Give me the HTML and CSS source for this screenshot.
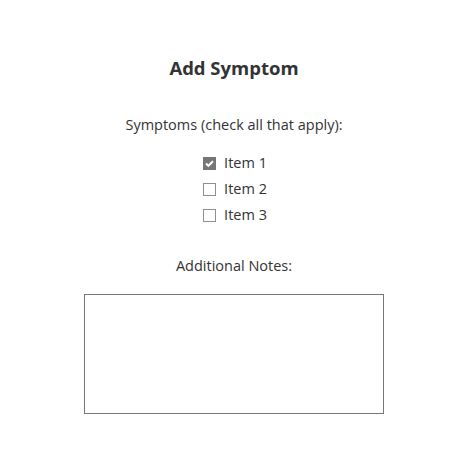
FILE: index.html
```html
<!DOCTYPE html>
<html>
<head>
<meta charset="utf-8">
<link rel="stylesheet" href="styles.css">
</head>
<body>
<main class="form">
  <h1 class="title">Add Symptom</h1>
  <p class="label">Symptoms (check all that apply):</p>
  <div class="items">
    <label class="item"><span class="box checked"><svg viewBox="0 0 13 13" width="13" height="13"><path d="M3 6.6 L5.4 8.8 L10 4.2" fill="none" stroke="#fff" stroke-width="2"/></svg></span>Item 1</label>
    <label class="item"><span class="box"></span>Item 2</label>
    <label class="item"><span class="box"></span>Item 3</label>
  </div>
  <p class="label notes-label">Additional Notes:</p>
  <textarea class="notes"></textarea>
</main>
</body>
</html>
```
FILE: styles.css
```css
html, body {
  margin: 0;
  background: #fff;
}
body {
  font-family: "Open Sans", "Noto Sans", sans-serif;
  color: #333;
}
.form {
  display: flex;
  flex-direction: column;
  align-items: center;
  padding-top: 54px;
}
.title {
  margin: 0;
  font-size: 18.5px;
  font-weight: 700;
  line-height: 28px;
  color: #333;
}
.label {
  margin: 0;
  font-size: 14.5px;
  line-height: 20px;
}
.title + .label {
  margin-top: 33px;
}
.items {
  margin-top: 18px;
  margin-left: 2px;
  display: flex;
  flex-direction: column;
  gap: 6px;
}
.item {
  display: flex;
  align-items: center;
  font-size: 14.5px;
  line-height: 20px;
}
.box {
  width: 13px;
  height: 13px;
  box-sizing: border-box;
  border: 1px solid #8f8f8f;
  margin-right: 8px;
  background: #fff;
  display: flex;
}
.box.checked {
  background: #767676;
  border-color: #767676;
}
.box svg {
  margin: -1px;
}
.notes-label {
  margin-top: 31px;
}
.notes {
  margin-top: 18px;
  width: 300px;
  height: 120px;
  box-sizing: border-box;
  border: 1px solid #767676;
  resize: none;
  padding: 2px;
}
```
